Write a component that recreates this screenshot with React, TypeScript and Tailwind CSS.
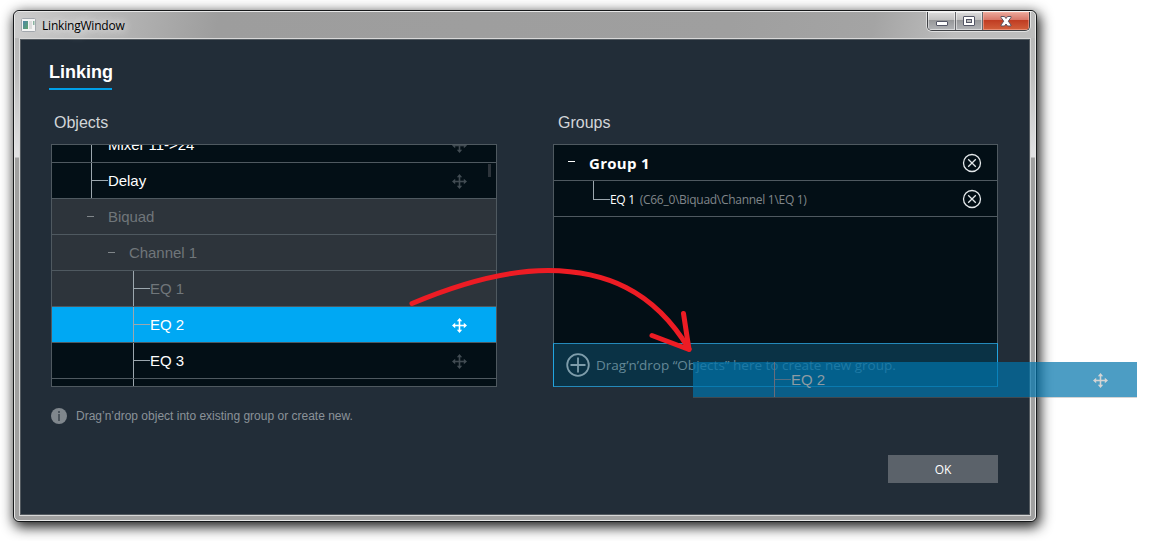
import clsx from "clsx";

type RowState = "normal" | "disabled" | "selected";

const OBJECTS: Array<{ id: string; label: string; kind: "leaf" | "branch"; pad: string; state: RowState; movable?: boolean }> = [
  { id: "mixer", label: "Mixer 11->24", kind: "leaf", pad: "pl-[39px]", state: "normal", movable: true },
  { id: "delay", label: "Delay", kind: "leaf", pad: "pl-[39px]", state: "normal", movable: true },
  { id: "biquad", label: "Biquad", kind: "branch", pad: "pl-[35px]", state: "disabled" },
  { id: "channel1", label: "Channel 1", kind: "branch", pad: "pl-[56px]", state: "disabled" },
  { id: "eq1", label: "EQ 1", kind: "leaf", pad: "pl-[81px]", state: "disabled" },
  { id: "eq2", label: "EQ 2", kind: "leaf", pad: "pl-[81px]", state: "selected", movable: true },
  { id: "eq3", label: "EQ 3", kind: "leaf", pad: "pl-[81px]", state: "normal", movable: true },
];

function MoveIcon({ className }: { className?: string }) {
  return (
    <svg width="15" height="15" viewBox="0 0 15 15" className={clsx("shrink-0", className)} fill="currentColor">
      <path d="M7 3h1v4h4v1H8v4H7V8H3V7h4z" stroke="currentColor" strokeWidth=".6" />
      <path d="M7.5 0 10.2 3.2H4.8zM7.5 15l2.700-3.200H4.800zM0 7.500l3.200-2.700v5.400zM15 7.500l-3.200-2.700v5.400z" />
    </svg>
  );
}

function RemoveIcon() {
  return (
    <svg width="20" height="20" viewBox="0 0 20 20" fill="none" stroke="#e4e8ea" strokeWidth="1.3" className="mr-[15px] shrink-0">
      <circle cx="10" cy="10" r="8.5" />
      <path d="m6.2 6.2 7.600 7.600M13.800 6.200l-7.600 7.600" />
    </svg>
  );
}

function ObjectRow({ item }: { item: (typeof OBJECTS)[number] }) {
  return (
    <div
      className={clsx(
        "flex h-9 shrink-0 items-center border-b border-[#4f5960] pr-[29px] text-[15px]",
        item.pad,
        item.state === "normal" && "bg-[#030f16] text-white",
        item.state === "disabled" && "bg-[#2d343b] text-[#70767a]",
        item.state === "selected" && "bg-[#00a8f3] text-white",
      )}
    >
      {item.kind === "leaf" ? (
        <>
          <span className="h-full w-px bg-[#9ca7ae]" />
          <span className="h-px w-4 bg-[#9ca7ae]" />
        </>
      ) : (
        <span className="mr-[14px] h-px w-[7px] bg-[#80868a]" />
      )}
      <span className="whitespace-nowrap pt-[2px] tracking-[-0.05px]">{item.label}</span>
      {item.movable && <MoveIcon className={clsx("ml-auto mt-0.5", item.state === "selected" ? "text-white" : "text-[#424c53]")} />}
    </div>
  );
}

function TitleBar() {
  return (
    <div className="flex h-[26px] items-start pl-[2px]">
      <div className="flex h-full items-center">
        <svg width="15" height="14" viewBox="0 0 15 14" className="ml-[4px] shrink-0">
          <defs>
            <linearGradient id="app" x1="0" y1="0" x2="1" y2="1">
              <stop offset="0" stopColor="#4f86a8" />
              <stop offset="1" stopColor="#5fa46c" />
            </linearGradient>
          </defs>
          <rect x=".5" y=".5" width="14" height="13" rx="1" fill="#f4f4f4" stroke="#a2a7ad" />
          <rect x="2" y="3" width="5" height="8" fill="url(#app)" />
          <rect x="8" y="3" width="3" height="8" fill="#dcdcdc" />
          <rect x="12" y="3" width="1.5" height="4" fill="#8bb5a2" />
        </svg>
        <span className="ml-[6px] whitespace-nowrap pt-px font-['Open_Sans','Noto_Sans',sans-serif] text-[12px] tracking-[-0.2px] text-black [text-shadow:0_0_8px_#ffffffc0,0_0_12px_#ffffffc0]">
          LinkingWindow
        </span>
      </div>
      <div className="ml-auto mr-[5px] flex h-[19px] overflow-hidden rounded-b-[5px] border border-t-0 border-[#3f4145] shadow-[0_0_0_1px_#ffffff90]">
        <div className="flex w-[28px] items-start justify-center border-r border-[#66686c] bg-[linear-gradient(#dcdcdc_0%,#c2c2c2_42%,#969799_46%,#b2b4b7_100%)] shadow-[inset_0_0_0_1px_#ffffff80]">
          <svg width="12" height="6" className="mt-[9px]">
            <rect x=".5" y=".5" width="11" height="4" rx=".5" fill="#fff" stroke="#535666" />
          </svg>
        </div>
        <div className="flex w-[27px] items-start justify-center border-r border-[#66686c] bg-[linear-gradient(#dcdcdc_0%,#c2c2c2_42%,#969799_46%,#b2b4b7_100%)] shadow-[inset_0_0_0_1px_#ffffff80]">
          <svg width="12" height="10" className="mt-[4px]">
            <rect x=".5" y=".5" width="11" height="9" rx=".5" fill="#fff" stroke="#535666" />
            <rect x="3.5" y="3.5" width="5" height="3" fill="#bbb" stroke="#535666" />
          </svg>
        </div>
        <div className="flex w-[46px] items-start justify-center bg-[linear-gradient(#eba99c_0%,#d9796a_42%,#c03c22_46%,#d2603c_100%)] shadow-[inset_0_0_0_1px_#ffb8a780]">
          <svg width="12" height="11" viewBox="0 0 12 11" className="mt-[4px]">
            <path d="M1 .5h3.500L6 2.500 7.500 .5H11v1L8.300 5.200 11 9v1H7.500L6 8 4.500 10H1V9l2.700-3.800L1 1.500z" fill="#fff" stroke="#5c5560" />
          </svg>
        </div>
      </div>
    </div>
  );
}

function ObjectsPanel() {
  return (
    <div className="flex w-[446px] flex-col">
      <h2 className="pl-[3px] pt-px text-[16px] leading-5 text-[#d3d6d8]">Objects</h2>
      <div className="relative mt-[11px] h-[243px] overflow-hidden border border-[#4f5960] bg-[#030f16]">
        <div className="-mt-[18px] flex flex-col">
          {OBJECTS.map((item) => (
            <ObjectRow key={item.id} item={item} />
          ))}
          <span className="ml-[81px] h-[7px] w-px bg-[#9ca7ae]" />
        </div>
        <span className="absolute right-[5px] top-[19px] h-[13px] w-[3px] bg-[#2d343b]" />
      </div>
    </div>
  );
}

function GroupsPanel() {
  return (
    <div className="flex w-[445px] flex-col">
      <h2 className="pl-[5px] pt-px text-[16px] leading-5 text-[#d3d6d8]">Groups</h2>
      <div className="mt-[11px] flex h-[199px] flex-col border border-b-0 border-[#4f5960] bg-[#030f16] font-['Open_Sans','Noto_Sans',sans-serif]">
        <div className="flex h-9 items-center border-b border-[#4f5960] pl-[14px]">
          <span className="mb-[3px] mr-[14px] h-px w-[7px] bg-white" />
          <span className="pt-px text-[15px] font-bold tracking-[0.3px] text-white">Group 1</span>
          <span className="ml-auto">
            <RemoveIcon />
          </span>
        </div>
        <div className="flex h-9 items-center border-b border-[#4f5960] pl-[39px] text-[12px]">
          <span className="mb-4 h-[19px] w-[17px] border-b border-l border-[#9ca7ae]" />
          <span className="pt-[2px] tracking-[-0.3px] text-white">EQ 1</span>
          <span className="ml-[5px] whitespace-nowrap pt-[2px] tracking-[-0.29px] text-[#80868a]">(C66_0\Biquad\Channel 1\EQ 1)</span>
          <span className="ml-auto">
            <RemoveIcon />
          </span>
        </div>
      </div>
      <div className="flex h-[44px] items-center border border-x-[#22a5e0] border-y-[#2489ba] bg-[#0a3245] pl-[12px] font-['Open_Sans','Noto_Sans',sans-serif]">
        <svg width="24" height="24" viewBox="0 0 24 24" fill="none" stroke="#7e9dab" strokeWidth="1.8" className="shrink-0">
          <circle cx="12" cy="12" r="10.8" />
          <path d="M12 4.500v15M4.500 12h15" />
        </svg>
        <span className="ml-[6px] whitespace-nowrap text-[13.5px] text-[#648897]">Drag’n’drop “Objects” here to create new group.</span>
      </div>
    </div>
  );
}

function DragGhost() {
  return (
    <div className="absolute left-[693px] top-[362px] flex h-[35px] w-[444px] items-center bg-[#0073ab]/70 pl-[81px] pr-[29px] text-[15px] text-[#8d9ba3] shadow-[0_1px_0_#80808055]">
      <span className="h-full w-px bg-[#6b6c79]" />
      <span className="h-px w-4 bg-[#536f84]" />
      <span className="pt-[2px]">EQ 2</span>
      <MoveIcon className="ml-auto mt-0.5 text-[#d5d5d5]" />
    </div>
  );
}

export default function App() {
  return (
    <div className="relative h-[541px] w-[1150px] overflow-hidden bg-white pl-[13px] pt-[10px] font-['Liberation_Sans',Arial,sans-serif]">
      <div className="h-[512px] w-[1024px] rounded-[6px] border border-[#16181a] bg-[#a0a0a0] shadow-[2px_4px_13px_1px_rgba(0,0,0,0.9)]">
        <div className="h-full rounded-[5px] border border-[#e8e8e8] bg-[linear-gradient(to_bottom,#b4b4b4_0px,#bdbdbd_60px,#e2e2e4_145px,#a0a0a0_146px)]">
          <div className="rounded-t-[5px] bg-[linear-gradient(100deg,#cccccc_0%,#b5b5b5_10%,#9d9d9d_20%,#9f9f9f_70%,#a4a4a4_84%,#bdbdbd_92%)]">
            <TitleBar />
          </div>
          <div className="mx-[4px] border border-[#d8d8d8]">
            <div className="flex h-[476px] flex-col border border-[#535a60] bg-[#222d38] pl-[30px] pr-[31px]">
              <h1 className="-ml-[2px] mt-[20px] h-[30px] w-[63px] self-start border-b-2 border-[#00a0e8] text-[18px] font-bold leading-[24px] text-white">Linking</h1>
              <div className="mt-[22px] flex justify-between">
                <ObjectsPanel />
                <GroupsPanel />
              </div>
              <div className="mt-[20px] flex h-[18px] items-center">
                <svg width="16" height="16" viewBox="0 0 16 16" className="shrink-0">
                  <circle cx="8" cy="8" r="8" fill="#80878d" />
                  <path d="M7 3h2v2H7zM7 6h2v7H7z" fill="#4c555d" />
                </svg>
                <p className="ml-[9px] whitespace-nowrap text-[12px] text-[#8b9298]">Drag’n’drop object into existing group or create new.</p>
              </div>
              <button className="mt-[30px] h-[28px] w-[110px] self-end bg-[#5b626a] pt-px font-['Open_Sans','Noto_Sans',sans-serif] text-[12px] text-white">OK</button>
            </div>
          </div>
        </div>
      </div>

      <DragGhost />

      <svg className="pointer-events-none absolute left-0 top-0" width="1150" height="541" fill="none" stroke="#ed1c24" strokeWidth="5" strokeLinecap="round" strokeLinejoin="round">
        <path d="M412 303.500C470 279 515 270.500 548 270.500C604 271 653 289 689 349" />
        <path d="M652 335.500 689 349.500 683.500 313.500" />
      </svg>
    </div>
  );
}
